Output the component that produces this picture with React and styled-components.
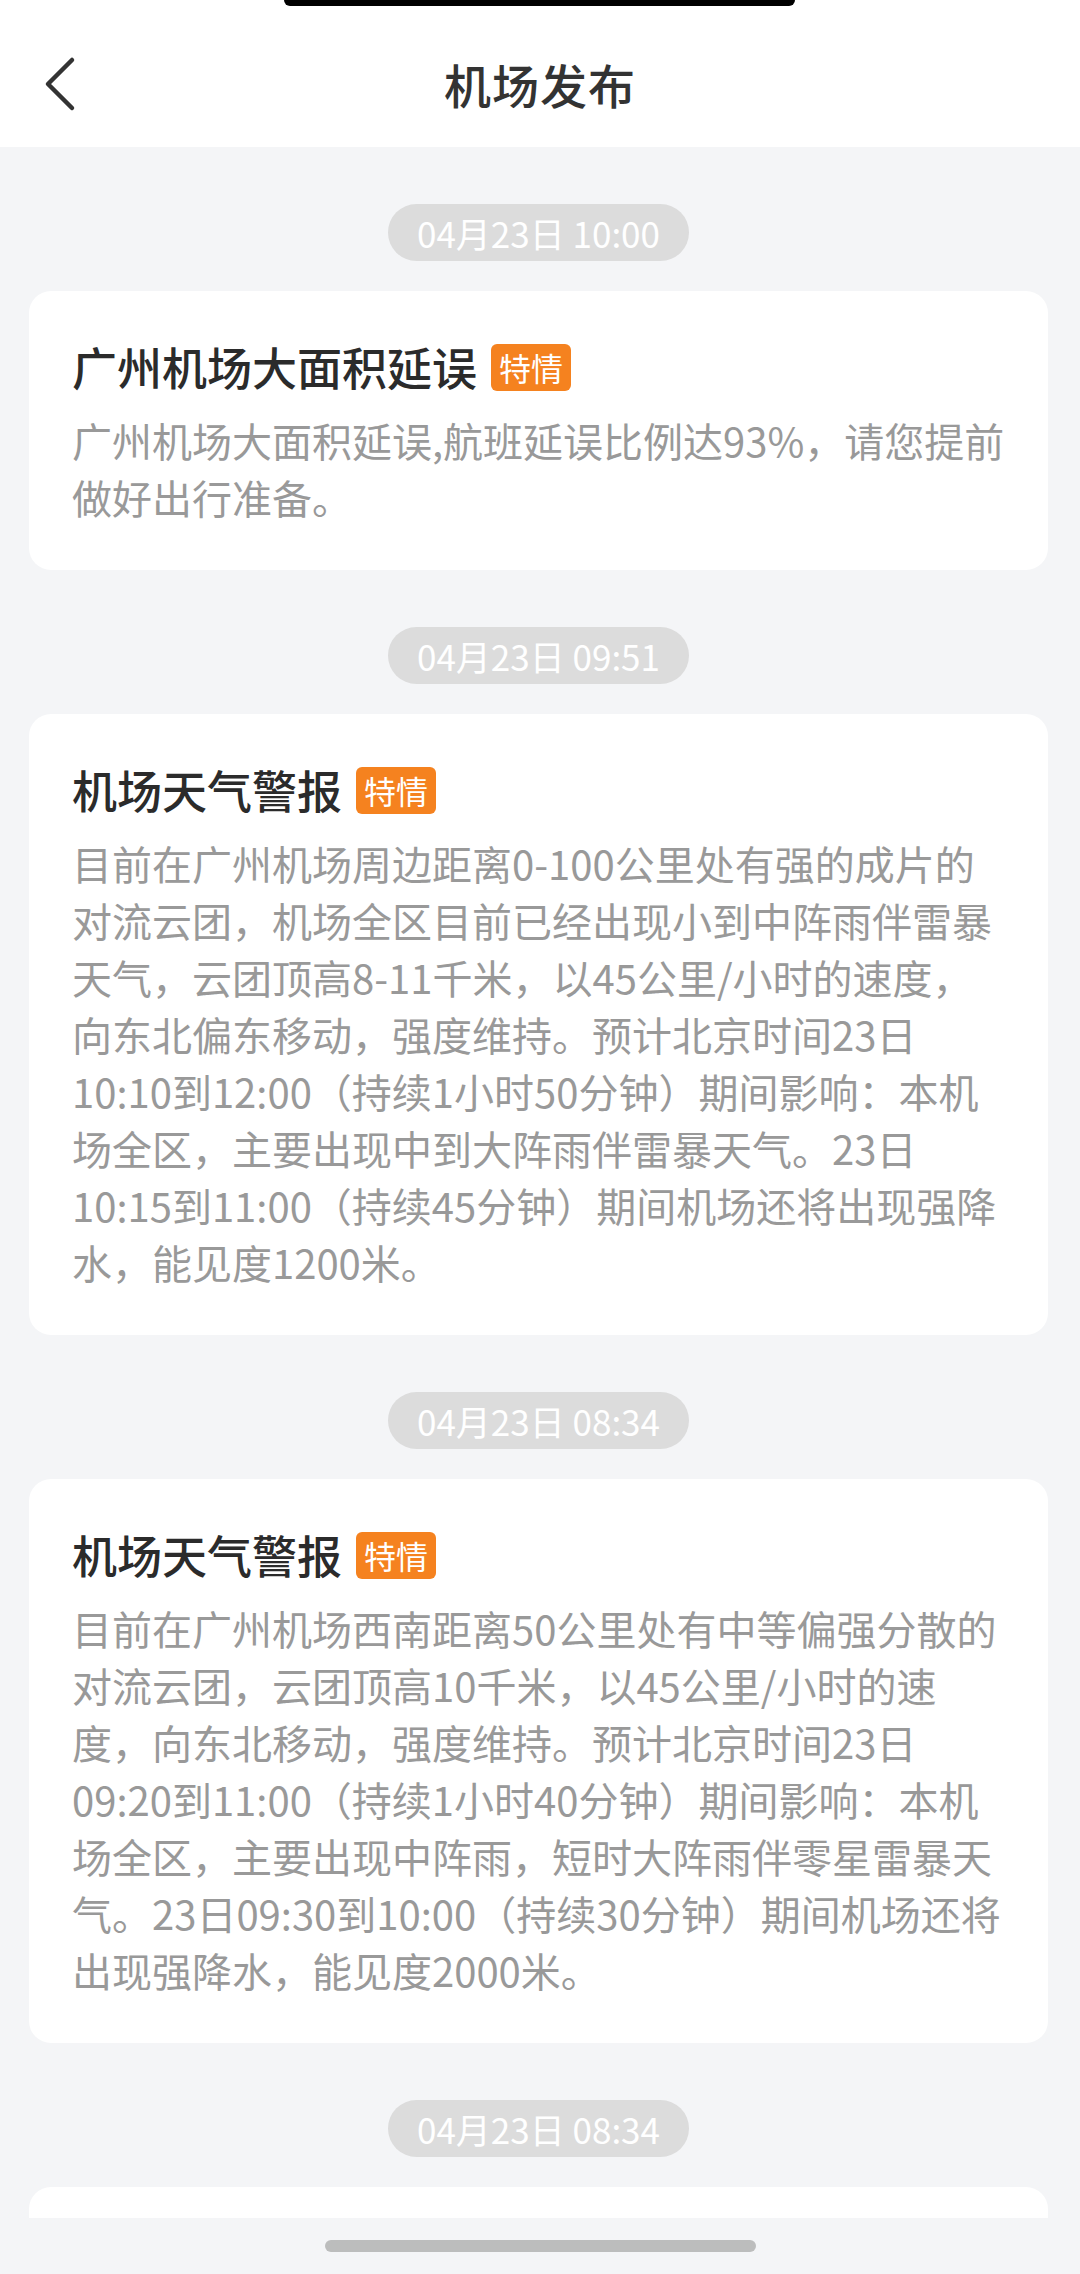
import React from "react";
import styled, { createGlobalStyle } from "styled-components";

const GlobalStyle = createGlobalStyle`
  * {
    box-sizing: border-box;
  }
  body {
    margin: 0;
    background-color: #f4f5f7;
    font-family: "Noto Sans CJK SC", "Noto Sans", sans-serif;
  }
`;

const Page = styled.div`
  width: 1080px;
  height: 2274px;
  display: flex;
  flex-direction: column;
  background-color: #f4f5f7;
  overflow: hidden;
  position: relative;
`;
const Header = styled.header`
  height: 147px;
  flex-shrink: 0;
  display: grid;
  grid-template-columns: 1fr auto 1fr;
  align-items: center;
  padding-top: 20px;
  background-color: #ffffff;
  position: relative;
`;
const Notch = styled.div`
  position: absolute;
  top: 0;
  left: 284px;
  width: 511px;
  height: 6px;
  background-color: #000;
  border-radius: 0 0 14px 14px;
`;
const Back = styled.button`
  justify-self: start;
  margin-left: 42px;
  padding: 0;
  border: none;
  background: transparent;
  display: flex;
`;
const PageTitle = styled.h1`
  margin: 0;
  font-size: 47px;
  font-weight: 500;
  color: #333333;
  letter-spacing: 1px;
`;
const Feed = styled.main`
  flex: 1;
  overflow: hidden;
  display: flex;
  flex-direction: column;
  padding: 0 32px 0 29px;
`;
const Group = styled.section`
  display: flex;
  flex-direction: column;
  align-items: center;
  gap: 30px;
  margin-top: 57px;
  flex-shrink: 0;
`;
const TimePill = styled.div`
  height: 57px;
  padding: 0 29px;
  border-radius: 29px;
  background-color: #dcdcdc;
  color: #ffffff;
  font-size: 35px;
  line-height: 57px;
`;
const Card = styled.article`
  align-self: stretch;
  background-color: #ffffff;
  border-radius: 22px;
  padding: 44px 40px 44px 43px;
`;
const TitleRow = styled.div`
  display: flex;
  align-items: center;
  gap: 14px;
  height: 64px;
`;
const Title = styled.h2`
  margin: 0;
  font-size: 45px;
  font-weight: 500;
  color: #2b2b2b;
  line-height: 64px;
`;
const Badge = styled.span`
  height: 47px;
  padding: 0 8px;
  border-radius: 6px;
  background-color: #f5821f;
  color: #ffffff;
  font-size: 32px;
  line-height: 47px;
`;
const Body = styled.p`
  margin: 13px 0 0;
  font-size: 40px;
  line-height: 57px;
  color: #999999;
`;
const BottomBar = styled.div`
  height: 56px;
  flex-shrink: 0;
  display: flex;
  align-items: center;
  justify-content: center;
  background-color: #f4f5f7;
`;
const HomeIndicator = styled.div`
  width: 431px;
  height: 12px;
  border-radius: 6px;
  background-color: #bcbdbd;
`;

const notices = [
  {
    time: "04月23日 10:00",
    title: "广州机场大面积延误",
    text: "广州机场大面积延误,航班延误比例达93%，请您提前做好出行准备。"
  },
  {
    time: "04月23日 09:51",
    title: "机场天气警报",
    text:
      "目前在广州机场周边距离0-100公里处有强的成片的对流云团，机场全区目前已经出现小到中阵雨伴雷暴天气，云团顶高8-11千米，以45公里/小时的速度，向东北偏东移动，强度维持。预计北京时间23日10:10到12:00（持续1小时50分钟）期间影响：本机场全区，主要出现中到大阵雨伴雷暴天气。23日10:15到11:00（持续45分钟）期间机场还将出现强降水，能见度1200米。"
  },
  {
    time: "04月23日 08:34",
    title: "机场天气警报",
    text:
      "目前在广州机场西南距离50公里处有中等偏强分散的对流云团，云团顶高10千米，以45公里/小时的速度，向东北移动，强度维持。预计北京时间23日09:20到11:00（持续1小时40分钟）期间影响：本机场全区，主要出现中阵雨，短时大阵雨伴零星雷暴天气。23日09:30到10:00（持续30分钟）期间机场还将出现强降水，能见度2000米。"
  },
  {
    time: "04月23日 08:34",
    title: "机场天气警报",
    text: "目前在广州机场西南距离50公里处有中等偏强分散的对流云团。"
  }
];

export default function App() {
  return (
    <Page>
      <GlobalStyle />
      <Header>
        <Notch />
        <Back aria-label="返回">
          <svg width="40" height="56" viewBox="0 0 40 56">
            <path
              d="M30 4 L6 28 L30 52"
              fill="none"
              stroke="#333"
              strokeWidth="4.5"
              strokeLinecap="round"
              strokeLinejoin="round"
            />
          </svg>
        </Back>
        <PageTitle>机场发布</PageTitle>
      </Header>
      <Feed>
        {notices.map((item, pos) => (
          <Group key={pos}>
            <TimePill>{item.time}</TimePill>
            <Card>
              <TitleRow>
                <Title>{item.title}</Title>
                <Badge>特情</Badge>
              </TitleRow>
              <Body>{item.text}</Body>
            </Card>
          </Group>
        ))}
      </Feed>
      <BottomBar>
        <HomeIndicator />
      </BottomBar>
    </Page>
  );
}
